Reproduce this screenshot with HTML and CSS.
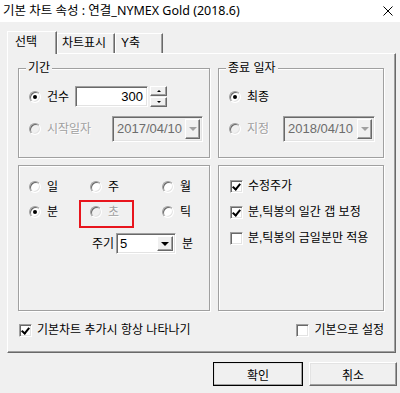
FILE: index.html
```html
<!DOCTYPE html>
<html lang="ko">

<head>
    <meta charset="UTF-8">
    <title>기본 차트 속성</title>
    <link rel="stylesheet" href="styles.css">
</head>

<body>
    <div class="titlebar">
        <span class="title">기본 차트 속성 : 연결_NYMEX Gold (2018.6)</span>
        <svg class="close" width="10" height="10" viewBox="0 0 10 10">
            <path d="M0.5 0.5 L9.5 9.5 M9.5 0.5 L0.5 9.5" stroke="#000" stroke-width="1" fill="none" />
        </svg>
    </div>

    <div class="tabs">
        <div class="tab tab-active">선택</div>
        <div class="tab tab-chart">차트표시</div>
        <div class="tab tab-y">Y축</div>
    </div>

    <div class="panel">
        <div class="groups">
            <!-- 기간 -->
            <div class="group group-period">
                <span class="legend">기간</span>
                <div class="row row-top">
                    <span class="radio checked"></span>
                    <span class="label label-count">건수</span>
                    <div class="field field-count">300</div>
                    <div class="spin">
                        <span class="spin-btn"><i class="arrow-up"></i></span>
                        <span class="spin-btn"><i class="arrow-down"></i></span>
                    </div>
                </div>
                <div class="row row-date">
                    <span class="radio disabled"></span>
                    <span class="label label-start disabled-text">시작일자</span>
                    <div class="combo combo-disabled combo-start">
                        <span class="combo-text">2017/04/10</span>
                        <span class="drop"><i class="arrow-down"></i></span>
                    </div>
                </div>
            </div>

            <!-- 종료 일자 -->
            <div class="group group-end">
                <span class="legend">종료 일자</span>
                <div class="row row-top">
                    <span class="radio checked"></span>
                    <span class="label">최종</span>
                </div>
                <div class="row row-date">
                    <span class="radio disabled"></span>
                    <span class="label label-fixed disabled-text">지정</span>
                    <div class="combo combo-disabled combo-end">
                        <span class="combo-text">2018/04/10</span>
                        <span class="drop"><i class="arrow-down"></i></span>
                    </div>
                </div>
            </div>

            <!-- 주기 단위 -->
            <div class="group group-unit">
                <div class="unit-grid">
                    <div class="opt"><span class="radio"></span><span class="label">일</span></div>
                    <div class="opt"><span class="radio"></span><span class="label">주</span></div>
                    <div class="opt"><span class="radio"></span><span class="label">월</span></div>
                    <div class="opt"><span class="radio checked"></span><span class="label">분</span></div>
                    <div class="opt"><span class="radio disabled"></span><span class="label disabled-text">초</span></div>
                    <div class="opt"><span class="radio"></span><span class="label">틱</span></div>
                </div>
                <div class="row row-period">
                    <span class="label">주기</span>
                    <div class="combo combo-period">
                        <span class="combo-text">5</span>
                        <span class="drop"><i class="arrow-down"></i></span>
                    </div>
                    <span class="label">분</span>
                </div>
                <span class="mark"></span>
            </div>

            <!-- 옵션 -->
            <div class="group group-options">
                <div class="check-row"><span class="check checked"></span><span class="label">수정주가</span></div>
                <div class="check-row"><span class="check checked"></span><span class="label">분,틱봉의 일간 갭 보정</span></div>
                <div class="check-row"><span class="check"></span><span class="label">분,틱봉의 금일분만 적용</span></div>
            </div>
        </div>

        <div class="footer-row">
            <div class="check-row"><span class="check checked"></span><span class="label">기본차트 추가시 항상 나타나기</span></div>
            <div class="check-row"><span class="check"></span><span class="label">기본으로 설정</span></div>
        </div>
    </div>

    <div class="buttons">
        <button class="btn btn-default">확인</button>
        <button class="btn">취소</button>
    </div>
</body>

</html>
```

FILE: styles.css
```css
body {
    margin: 0;
    width: 400px;
    height: 393px;
    overflow: hidden;
    background: #f0f0f0;
    font-family: "Liberation Sans", "Noto Sans CJK KR", sans-serif;
    font-size: 12px;
    color: #000;
}

.titlebar {
    height: 22px;
    background: #fff;
    display: flex;
    align-items: center;
    justify-content: space-between;
    padding: 0 7px 0 3px;
}

.title {
    font-family: "Noto Sans", "Noto Sans CJK KR", sans-serif;
    font-size: 12.5px;
    line-height: 16px;
}

.close {
    display: block;
}

/* tabs */
.tabs {
    display: flex;
    align-items: flex-end;
    height: 31px;
    padding-left: 7px;
}

.tab {
    position: relative;
    box-sizing: border-box;
    height: 20px;
    line-height: 18px;
    padding-left: 4px;
    background: #f0f0f0;
    border: 1px solid;
    border-color: #fff #696969 transparent #fff;
    border-bottom: none;
    box-shadow: inset -1px 0 #a0a0a0;
}

.tab-active {
    z-index: 1;
    width: 50px;
    height: 23px;
    margin-bottom: -1px;
    padding-left: 7px;
    line-height: 20px;
}

.tab-chart {
    width: 58px;
}

.tab-y {
    width: 48px;
    padding-left: 5px;
}

.panel {
    box-sizing: border-box;
    width: 389px;
    height: 300px;
    margin-left: 7px;
    padding: 14px 0 0 10px;
    border: 1px solid;
    border-color: #fff #696969 #696969 #fff;
    box-shadow: inset -1px -1px #a0a0a0;
}

.groups {
    display: grid;
    grid-template-columns: 192px 166px;
    grid-template-rows: 90px 146px;
    gap: 7px 8px;
}

.group {
    position: relative;
    box-sizing: border-box;
    border: 1px solid #a0a0a0;
    box-shadow: inset 1px 1px #fff, 1px 1px #fff;
}

.legend {
    position: absolute;
    top: -9px;
    left: 7px;
    padding: 0 2px;
    line-height: 16px;
    background: #f0f0f0;
}

.row {
    display: flex;
    align-items: center;
}

.label {
    line-height: 16px;
    white-space: nowrap;
}

.disabled-text {
    color: #a0a0a0;
    text-shadow: 1px 1px 0 #fff;
}

/* radio / check */
.radio {
    position: relative;
    flex: none;
    box-sizing: border-box;
    width: 12px;
    height: 12px;
    margin-right: 6px;
    border-radius: 50%;
    background: #fff;
    border: 1px solid;
    border-color: #a0a0a0 #fff #fff #a0a0a0;
    box-shadow: inset 1px 1px 0 #696969, inset -1px -1px 0 #e3e3e3;
}

.radio.checked::after {
    content: "";
    position: absolute;
    left: 3px;
    top: 3px;
    width: 4px;
    height: 4px;
    border-radius: 50%;
    background: #000;
}

.radio.disabled {
    background: #f0f0f0;
}

.check {
    position: relative;
    flex: none;
    box-sizing: border-box;
    width: 13px;
    height: 13px;
    margin-right: 5px;
    background: #fff;
    border: 1px solid;
    border-color: #a0a0a0 #fff #fff #a0a0a0;
    box-shadow: inset 1px 1px 0 #696969, inset -1px -1px 0 #e3e3e3;
}

.check.checked::after {
    content: "";
    position: absolute;
    left: 3px;
    top: 1px;
    width: 3px;
    height: 6px;
    border: solid #000;
    border-width: 0 2px 2px 0;
    transform: rotate(40deg);
}

.check-row {
    display: flex;
    align-items: center;
    height: 16px;
}

/* fields */
.field,
.combo {
    box-sizing: border-box;
    background: #fff;
    border: 1px solid;
    border-color: #a0a0a0 #fff #fff #a0a0a0;
    box-shadow: inset 1px 1px 0 #696969, inset -1px -1px 0 #e3e3e3;
}

.field-count {
    width: 73px;
    height: 21px;
    padding-right: 4px;
    text-align: right;
    line-height: 19px;
    font-size: 13px;
}

.spin {
    display: flex;
    flex-direction: column;
    justify-content: space-between;
    width: 17px;
    height: 21px;
    margin-left: 2px;
}

.spin-btn,
.drop {
    display: flex;
    align-items: center;
    justify-content: center;
    box-sizing: border-box;
    background: #f0f0f0;
    border: 1px solid;
    border-color: #fff #696969 #696969 #fff;
    box-shadow: inset -1px -1px 0 #a0a0a0;
}

.spin-btn {
    height: 10px;
}

.arrow-up,
.arrow-down {
    width: 0;
    height: 0;
    border-left: 2px solid transparent;
    border-right: 2px solid transparent;
}

.arrow-up {
    border-bottom: 2px solid #000;
}

.arrow-down {
    border-top: 2px solid #000;
}

.drop .arrow-down {
    border-left-width: 4px;
    border-right-width: 4px;
    border-top-width: 4px;
}

.label-count {
    width: 28px;
}

.row-top {
    margin-top: 17px;
    margin-left: 10px;
    height: 21px;
}

.row-date {
    margin-top: 9px;
    margin-left: 10px;
    height: 26px;
}

.label-start {
    width: 65px;
}

.label-fixed {
    width: 36px;
}

.combo {
    display: flex;
    align-items: stretch;
    padding: 2px;
}

.combo-text {
    flex: 1;
    padding-left: 2px;
    line-height: 20px;
    font-size: 13px;
}

.combo-disabled {
    background: #f0f0f0;
}

.combo-disabled .combo-text {
    color: #6d6d6d;
}

.combo-disabled .drop .arrow-down {
    border-top-color: #a0a0a0;
}

.combo-start {
    width: 91px;
    height: 26px;
}

.combo-end {
    width: 92px;
    height: 26px;
}

.drop {
    width: 15px;
}

/* unit group */
.unit-grid {
    display: grid;
    grid-template-columns: 61px 72px auto;
    grid-auto-rows: 16px;
    row-gap: 9px;
    margin: 13px 0 0 10px;
}

.opt {
    display: flex;
    align-items: center;
}

.row-period {
    margin: 13px 0 0 73px;
    height: 21px;
}

.combo-period {
    width: 60px;
    height: 21px;
    margin: 0 6px 0 2px;
    padding: 2px;
}

.combo-period .combo-text {
    line-height: 15px;
    padding-left: 1px;
}

.combo-period .drop {
    width: 16px;
}

.mark {
    position: absolute;
    left: 60px;
    top: 34px;
    box-sizing: border-box;
    width: 55px;
    height: 28px;
    border: 2px solid #e8151d;
}

/* option group */
.group-options {
    display: flex;
    flex-direction: column;
    gap: 10px;
    padding: 12px 0 0 11px;
}

.footer-row {
    display: flex;
    justify-content: space-between;
    margin: 11px 11px 0 1px;
}

/* buttons */
.buttons {
    display: flex;
    justify-content: flex-end;
    gap: 6px;
    padding: 9px 3px 0 0;
}

.btn {
    box-sizing: border-box;
    width: 88px;
    height: 24px;
    padding: 0;
    font: inherit;
    color: #000;
    background: #f0f0f0;
    border: 1px solid;
    border-color: #fff #696969 #696969 #fff;
    box-shadow: inset -1px -1px 0 #a0a0a0, inset 1px 1px 0 #e3e3e3;
}

.btn-default {
    width: 90px;
    outline: 1px solid #000;
    outline-offset: -1px;
    border-color: #fff #404040 #404040 #fff;
}
```
